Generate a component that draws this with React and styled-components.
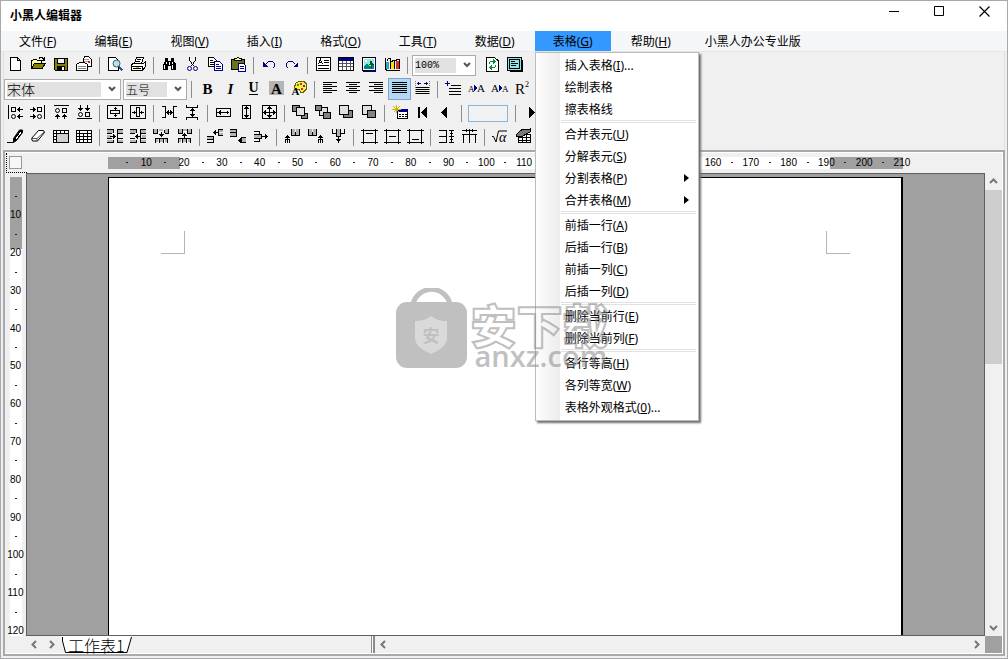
import React from 'react';
import styled, { createGlobalStyle } from 'styled-components';

const GlobalStyle = createGlobalStyle`
  * {
    box-sizing: border-box;
  }

  body {
    margin: 0;
    font-family: 'Noto Sans', 'Noto Sans CJK SC', sans-serif;
    font-size: 12px;
    color: #000;
    overflow: hidden;
  }

  button,
  select {
    font: inherit;
    color: inherit;
    margin: 0;
    padding: 0;
    border: 0;
    background: none;
  }
`;

const GRAY = '#a0a0a0';
const FACE = '#f0f0f0';

const Window = styled.div`
  position: relative;
  display: flex;
  flex-direction: column;
  height: 100vh;
  border: 1px solid #a9a9ab;
  background: ${FACE};
`;

const TitleBar = styled.header`
  display: flex;
  justify-content: space-between;
  height: 30px;
  padding-left: 9px;
  background: #fff;
`;

const Title = styled.h1`
  margin: 0;
  font-size: 12px;
  font-weight: 700;
  line-height: 29px;
`;

const WindowButton = styled.button`
  width: 45px;
  height: 21px;
  line-height: 0;
`;

const MenuBar = styled.nav`
  display: flex;
  gap: 2px;
  height: 21px;
  background: #f5f6f7;
  border-bottom: 1px solid #e6e6e6;
`;

const MenuSlot = styled.div`
  position: relative;
`;

const MenuButton = styled.button`
  display: block;
  height: 20px;
  padding: 0 ${(p) => (p.$plain ? 14 : 18)}px;
  line-height: 22px;
  white-space: nowrap;
  background: ${(p) => (p.$open ? '#3399ff' : 'transparent')};
`;

const Key = styled.span`
  text-decoration: underline;
  text-underline-offset: 1px;
  text-decoration-skip-ink: none;
`;

const Dropdown = styled.div`
  position: absolute;
  z-index: 5;
  top: 21px;
  left: 0;
  width: 164px;
  padding: 1px 2px 2px 0;
  border: 1px solid #bcbcbc;
  background: linear-gradient(to right, #fdfdfd, #ececec 24px, #fff 24px);
  box-shadow: 2px 2px 2px #6e6e6e;
`;

const DropdownItem = styled.button`
  display: flex;
  align-items: center;
  justify-content: space-between;
  width: 100%;
  height: 22px;
  padding: 0 7px 0 29px;
  white-space: nowrap;
  text-align: left;
`;

const Divider = styled.hr`
  height: 3px;
  margin: 0 0 0 25px;
  border: solid #e2e2e2;
  border-width: 1px 0;
`;

const Toolbars = styled.div`
  margin: 0 2px;
  padding: 1px 0;
  border: solid #dedede;
  border-width: 0 1px;
`;

const ToolRow = styled.div`
  display: flex;
  align-items: center;
  height: 24px;
  overflow: hidden;
`;

const ToolButton = styled.button`
  display: flex;
  align-items: center;
  justify-content: center;
  flex: none;
  width: 23px;
  height: 22px;
  padding: 0;
  border: 1px solid ${(p) => (p.$active ? '#7da2ce' : 'transparent')};
  background: ${(p) => (p.$active ? '#b5d7f3' : 'transparent')};
`;

const Separator = styled.span`
  flex: none;
  width: 1px;
  height: 17px;
  margin: 0 4px 0 3px;
  background: #8c8c8c;
`;

const Combo = styled.span`
  display: flex;
  align-items: center;
  flex: none;
  width: ${(p) => p.$width}px;
  height: 21px;
  margin-right: ${(p) => p.$gap}px;
  padding-left: 2px;
  border: 1px solid #acacac;
  background: #fff;
`;

const ComboSelect = styled.select`
  flex: 1;
  min-width: 0;
  height: 15px;
  appearance: none;
  outline: none;
  border-radius: 0;
  background: #e1e1e1;
  font-family: ${(p) => (p.$mono ? "'Liberation Mono', monospace" : "'Noto Sans CJK SC', sans-serif")};
  font-size: ${(p) => p.$size}px;
  font-weight: ${(p) => (p.$mono ? 400 : 300)};
  line-height: 15px;
`;

const ComboArrow = styled.svg`
  flex: none;
  width: 19px;
  height: 19px;
`;

const PageBox = styled.input`
  flex: none;
  width: 40px;
  height: 17px;
  margin: 0 4px 0 2px;
  border: 1px solid #86b5dc;
  background: #f2f2f2;
`;

const Workspace = styled.main`
  display: flex;
  flex-direction: column;
  flex: 1;
  min-height: 0;
  margin: 0 2px 2px;
  border: 2px solid #a9a9ad;
  box-shadow: inset -1px -1px #fff, inset 0 1px #fff;
  padding: 0 0 1px;
`;

const RulerRow = styled.div`
  display: flex;
  height: 21px;
`;

const Corner = styled.div`
  width: 21px;
  padding: 3px 0 0 2px;
  margin: 1px -1px 0 1px;
  border: dotted #000;
  border-width: 0 0 1px 1px;
`;

const CornerButton = styled.button`
  display: block;
  width: 13px;
  height: 13px;
  border: 1px solid #9a9a9a;
  background: #f6f6f6;
`;

const RulerTrack = styled.div`
  display: flex;
  flex: 1;
  justify-content: center;
  align-items: center;
  margin-right: 18px;
`;

const Ruler = styled.div`
  display: flex;
  flex-direction: ${(p) => (p.$vertical ? 'column' : 'row')};
  width: ${(p) => (p.$vertical ? '12px' : '795px')};
  height: ${(p) => (p.$vertical ? 'auto' : '12px')};
  padding: ${(p) => (p.$vertical ? '10px 0 0' : '0 0 0 10px')};
  background: ${(p) =>
    p.$vertical
      ? `linear-gradient(to bottom, ${GRAY} 72px, #fff 72px)`
      : `linear-gradient(to right, ${GRAY} 72px, #fff 72px, #fff 722px, ${GRAY} 722px)`};
`;

const Tick = styled.span`
  display: flex;
  flex: none;
  align-items: center;
  justify-content: center;
  width: ${(p) => (p.$vertical ? '100%' : '5mm')};
  height: ${(p) => (p.$vertical ? '5mm' : '12px')};
  font: 10px/12px 'Liberation Sans', sans-serif;
`;

const Dot = styled.i`
  width: 2px;
  height: 1px;
  background: #222;
`;

const Body = styled.div`
  display: flex;
  flex: 1;
  min-height: 0;
`;

const SideRuler = styled.div`
  display: flex;
  justify-content: center;
  flex: none;
  width: 21px;
  padding: 4px 0 0;
  overflow: hidden;
`;

const Canvas = styled.div`
  display: flex;
  justify-content: center;
  flex: 1;
  min-width: 0;
  padding-top: 3px;
  overflow: hidden;
  border: 1px solid #5f5f5f;
  background: ${GRAY};
`;

const Page = styled.section`
  display: flex;
  justify-content: space-between;
  align-items: flex-start;
  flex: none;
  width: 795px;
  padding: 53px 51px 0 52px;
  border: solid #000;
  border-width: 1px 2px 0 1px;
  background: #fff;
`;

const MarginMark = styled.span`
  width: 24px;
  height: 23px;
  border: solid #b4b4b4;
  border-width: ${(p) => (p.$side === 'left' ? '0 1px 1px 0' : '0 0 1px 1px')};
`;

const ScrollColumn = styled.div`
  display: flex;
  flex-direction: column;
  flex: none;
  width: 17px;
  margin-right: 1px;
`;

const ScrollButton = styled.button`
  flex: none;
  width: 17px;
  height: 17px;
  line-height: 0;
`;

const Thumb = styled.div`
  height: 174px;
  background: #cdcdcd;
`;

const Spacer = styled.div`
  flex: 1;
`;

const BottomBar = styled.footer`
  display: flex;
  height: 17px;
  padding: 0 1px 0 21px;
`;

const Sheets = styled.div`
  display: flex;
  width: 345px;
`;

const SheetTab = styled.button`
  display: flex;
  margin-left: 2px;
  height: 17px;
  font: 16px/18px 'Noto Sans CJK SC', sans-serif;
  font-weight: 300;
`;

const SheetName = styled.span`
  height: 17px;
  padding: 0 1px;
  border-bottom: 1px solid #000;
  background: #fff;
  white-space: nowrap;
`;

const Splitter = styled.span`
  width: 4px;
  border: solid #8a8a8a;
  border-width: 0 2px 0 1px;
  background: #fff;
`;

const Grip = styled.span`
  width: 17px;
  background: ${GRAY};
`;

const Watermark = styled.div`
  position: absolute;
  z-index: 10;
  inset: 0 4px 2px 0;
  display: flex;
  align-items: center;
  justify-content: center;
  gap: 4px;
  opacity: 0.5;
  pointer-events: none;
`;

const Brand = styled.div`
  display: flex;
  flex-direction: column;
  padding-top: 10px;
  width: 138px;
  white-space: nowrap;
`;

const BrandName = styled.span`
  font: 900 46px/44px 'Noto Sans CJK SC', sans-serif;
  color: transparent;
  -webkit-text-stroke: 2px #828282;
`;

const BrandSite = styled.span`
  padding-left: 4px;
  font: 600 29px/22px 'Open Sans', sans-serif;
  color: #828282;
`;

const Glyph = styled.svg`
  display: block;
  flex: none;
  width: 17px;
  height: 16px;
  overflow: visible;
  fill: none;
  stroke: #000;
  shape-rendering: crispEdges;

  text {
    fill: #000;
    stroke: none;
  }
`;

const HALF = '#b4b4b4';

const icons = {
  新建: <path d="M3.500.500h7l3 3v9.500h-10zM10.500.500v3h3" fill="#fff" />,
  打开: (
    <>
      <path d="M1.500 11.500v-8h1l1-1h3l1 1h4v3" fill="#ffff9c" />
      <path d="M1.500 11.500l3-5h11l-3.500 5z" fill="#848400" />
      <path d="M9 1.500l1-1h2l2 2M14.500 0v3h-3" />
    </>
  ),
  保存: (
    <>
      <path d="M1.500 1.500h13v12h-12l-1-1z" fill="#848400" />
      <path d="M4.500 1.500h7v5h-7z" fill="#f0f0f0" />
      <path d="M4 9h8v5H4z" fill="#000" stroke="none" />
      <path d="M9 10h2v3H9z" fill="#fff" stroke="none" />
    </>
  ),
  传真: (
    <>
      <path d="M6.500 6.500l2-7h4l3 3v7h-4" fill="#fff" />
      <path d="M8 2.500h5M8 4.500h4" stroke="#999" />
      <path d="M.500 7.500l3-2h5l3 2v6h-11z" fill="#fff" />
      <path d="M2 9.500h8M2 11.500h8" stroke="#848484" />
      <path d="M12 4h2v2h-2z" fill="#e02020" stroke="none" />
    </>
  ),
  打印预览: (
    <>
      <path d="M1.500.500h7l3 3v10h-10z" fill="#fff" />
      <circle cx="9.500" cy="6.500" r="3.500" fill="#a5e8ee" stroke="#555" shapeRendering="auto" />
      <path d="M12 9.500l3.500 4" stroke="#2f4f9f" strokeWidth="2" />
    </>
  ),
  打印: (
    <>
      <path d="M4.500 6.500l2-6h7l-2 6" fill="#fff" />
      <path d="M7 2.500h4M6 4.500h4" />
      <path d="M1.500 7.500l2-1h10l2-2v5l-3 4h-11z" fill="#fff" />
      <path d="M1 9.500h11M12.500 9v4M3 11.500h8" />
      <path d="M6 10h3v1H6z" fill="#d8c800" stroke="none" />
    </>
  ),
  查找: (
    <>
      <path d="M4 1h3v3h3V1h3v3l1 2 1 1v6h-5V9H7v4H2V7l1-1 1-2z" fill="#000" stroke="none" />
      <path d="M5.500 5v2M11.500 5v2M3.500 8v4M8.500 5v3M11.500 8v4" stroke="#fff" />
    </>
  ),
  剪切: (
    <>
      <path d="M5.500 0v3l4 6M11.500 0v3l-4 6" />
      <circle cx="5.500" cy="11.500" r="2" stroke="#000084" shapeRendering="auto" />
      <circle cx="11.500" cy="11.500" r="2" stroke="#000084" shapeRendering="auto" />
    </>
  ),
  复制: (
    <>
      <path d="M1.500.500h5l3 3v6h-8z" fill="#fff" />
      <path d="M3 3.500h3M3 5.500h4M3 7.500h4" />
      <path d="M7.500 4.500h5l3 3v6h-8z" fill="#fff" stroke="#000084" />
      <path d="M9 7.500h3M9 9.500h5M9 11.500h5" stroke="#000084" />
    </>
  ),
  粘贴: (
    <>
      <path d="M1.500 2.500h13v10h-13z" fill="#6f6f20" />
      <path d="M4.500 3.500v-2h2l1-1h1l1 1h2v2z" fill="#ffff9c" />
      <path d="M8.500 6.500h5l2 2v5.500h-7z" fill="#fff" stroke="#000084" />
      <path d="M10 9.500h4M10 11.500h4" stroke="#000084" />
    </>
  ),
  撤销: (
    <>
      <path d="M4.500 7.500l3-3h4l2 2v3l-2 2" stroke="#000084" />
      <path d="M2 5v5h5z" fill="#000084" stroke="none" />
    </>
  ),
  恢复: (
    <>
      <path d="M11.500 7.500l-3-3h-4l-2 2v3l2 2" stroke="#000084" />
      <path d="M14 5v5H9z" fill="#000084" stroke="none" />
    </>
  ),
  文本框: (
    <>
      <path d="M1.500.500h14v13h-14z" fill="#fff" />
      <path d="M3.500 7l2-4.500 2 4.500M4 5.500h3M9 3.500h5M9 5.500h5M3 8.500h11M3 11.500h11" />
    </>
  ),
  表格: (
    <>
      <path d="M.500.500h15v13H.500z" fill="#fff" />
      <path d="M1 1h14v3H1z" fill="#000084" stroke="none" />
      <path d="M1 6.500h14M1 9.500h14M4.500 4v9M8.500 4v9M12.500 4v9" stroke="#555" />
    </>
  ),
  图片: (
    <>
      <path d="M1.500.500h13v13h-13z" fill="#fff" />
      <path d="M3 2h10v10H3z" fill="#8ee6e6" stroke="none" />
      <path d="M3 12v-3l3-2 3 2 4-1v4z" fill="#008484" stroke="none" />
      <path d="M10 3l3 5h-2v3h-1V8H8z" fill="#006400" stroke="none" />
      <circle cx="5" cy="4" r="1" fill="#fff" stroke="none" />
      <path d="M14.500 1v13H2" stroke="#000084" />
    </>
  ),
  图表: (
    <>
      <path d="M1.500 1v11.500l2 1H16" />
      <path d="M2 5h3v7H2z" fill="#2aa9c0" stroke="none" />
      <path d="M7 5h3v7H7z" fill="#ffe000" stroke="none" />
      <path d="M12 4h3v8h-3z" fill="#e03020" stroke="none" />
      <path d="M2.500 4.500l2-3h2V12M7.500 5.500l1-2h2V12M11.500 4.500l1-2h3V12M6.500 5v7" />
    </>
  ),
  刷新: (
    <>
      <path d="M2.500.500h8l4 3.500v10h-12z" fill="#fff" />
      <path d="M5.500 7V5.500l1-1H10M11.500 8v1.500l-1 1H7" stroke="#008a3a" />
      <path d="M9 2l3 2.500L9 7zM8 8v5l-3-2.500z" fill="#008a3a" stroke="none" />
    </>
  ),
  属性: (
    <>
      <path d="M.500.500h14v13H.500z" fill="#8fe3e3" />
      <path d="M2.500 2.500h10v9h-10zM4 4.500h4M4 6.500h7M4 8.500h5M15.500 3v11.500H3" />
    </>
  ),
  加粗: (
    <text x="8.500" y="12.500" textAnchor="middle" fontFamily="Liberation Serif, serif" fontSize="15" fontWeight="700">
      B
    </text>
  ),
  倾斜: (
    <text x="8.500" y="12.500" textAnchor="middle" fontFamily="Liberation Serif, serif" fontSize="15" fontWeight="700" fontStyle="italic">
      I
    </text>
  ),
  下划线: (
    <>
      <text x="8.500" y="11" textAnchor="middle" fontFamily="Liberation Serif, serif" fontSize="14" fontWeight="700">
        U
      </text>
      <path d="M4 13.500h9" />
    </>
  ),
  底纹: (
    <>
      <path d="M1 0h15v14H1z" fill="#b4b4b4" stroke="none" />
      <text x="8.500" y="12.500" textAnchor="middle" fontFamily="Liberation Serif, serif" fontSize="15" fontWeight="700">
        A
      </text>
    </>
  ),
  颜色: (
    <>
      <path d="M3.500 6.500l1-4 4-2.500h4l3 3v5l-3 3h-3l-1-2-3-1z" fill="#ffec3d" stroke="#66600c" />
      <path d="M9 2h2v2H9z" fill="#e02020" stroke="none" />
      <path d="M12 4h2v2h-2z" fill="#2040e0" stroke="none" />
      <path d="M6 3h2v2H6z" fill="#10a040" stroke="none" />
      <path d="M10 7h2v2h-2z" fill="#e02020" stroke="none" />
      <text x="4.500" y="14" textAnchor="middle" fontFamily="Liberation Serif, serif" fontSize="11" fontWeight="700">
        A
      </text>
    </>
  ),
  左对齐: <path d="M1 1.500h14M1 3.500h9M1 5.500h14M1 7.500h9M1 9.500h14M1 11.500h9" />,
  居中: <path d="M1 1.500h14M4 3.500h8M1 5.500h14M4 7.500h8M1 9.500h14M4 11.500h8" />,
  右对齐: <path d="M1 1.500h14M6 3.500h9M1 5.500h14M6 7.500h9M1 9.500h14M6 11.500h9" />,
  两端对齐: <path d="M1 1.500h15M1 3.500h15M1 5.500h15M1 7.500h15M1 9.500h15M1 11.500h15" />,
  分散对齐: (
    <>
      <path d="M2 6.500h13M2 8.500h13M2 10.500h13M2 12.500h13" />
      <path d="M1.500 0v14M15.500 0v14" stroke="#777" strokeDasharray="1 1" />
      <path d="M3 2.500h4M10 2.500h4M4.500 1v3M12.500 1v3" stroke="#000084" />
    </>
  ),
  行距: (
    <>
      <path d="M6 4.500h10M4 7.500h12M4 10.500h12M4 13.500h12" />
      <path d="M0 2.500h5M2.500 0v5" stroke="#000084" />
    </>
  ),
  缩小字距: (
    <>
      <text x="0" y="11" fontFamily="Liberation Serif, serif" fontSize="9">A</text>
      <text x="9" y="11" fontFamily="Liberation Serif, serif" fontSize="11">A</text>
      <path d="M6 4l3 3-3 3z" fill="#000084" stroke="none" />
    </>
  ),
  放大字距: (
    <>
      <text x="0" y="11" fontFamily="Liberation Serif, serif" fontSize="11">A</text>
      <text x="11" y="11" fontFamily="Liberation Serif, serif" fontSize="9">A</text>
      <path d="M8 4l3 3-3 3z" fill="#000084" stroke="none" />
    </>
  ),
  上标: (
    <>
      <text x="1" y="13" fontFamily="Liberation Serif, serif" fontSize="15">R</text>
      <text x="11" y="6" fontFamily="Liberation Serif, serif" fontSize="8">2</text>
    </>
  ),
  靠左: (
    <>
      <path d="M1.500 0v14M4.500 2.500h4v4h-4zM10 4.500h6M10 11.500h6" />
      <circle cx="6.500" cy="11.500" r="2" shapeRendering="auto" />
      <path d="M10 4.500l3-2.500v5zM10 11.500l3-2.500v5z" fill="#000" stroke="none" />
    </>
  ),
  靠右: (
    <>
      <path d="M14.500 0v14M7.500 2.500h4v4h-4zM0 4.500h6M0 11.500h6" />
      <circle cx="9.500" cy="11.500" r="2" shapeRendering="auto" />
      <path d="M6 4.500l-3-2.500v5zM6 11.500l-3-2.500v5z" fill="#000" stroke="none" />
    </>
  ),
  靠上: (
    <>
      <path d="M1 .500h15M9.500 3.500h4v4h-4zM4.500 10v4M11.500 10v4" />
      <circle cx="4.500" cy="5.500" r="2" shapeRendering="auto" />
      <path d="M4.500 9L7 12H2zM11.500 9l2.500 3H9z" fill="#000" stroke="none" />
    </>
  ),
  靠下: (
    <>
      <path d="M1 13.500h15M9.500 7.500h4v4h-4zM4.500 0v4M11.500 0v4" />
      <circle cx="4.500" cy="9.500" r="2" shapeRendering="auto" />
      <path d="M4.500 6L7 3H2zM11.500 6L14 3H9z" fill="#000" stroke="none" />
    </>
  ),
  垂直居中: (
    <>
      <path d="M.500.500h15v13H.500zM3.500 5.500h9v3h-9zM8.500 2v2M8.500 10v2" />
      <path d="M8.500 5L6 3h5zM8.500 9l2.500 2H6z" fill="#000" stroke="none" />
    </>
  ),
  水平居中: (
    <>
      <path d="M.500.500h15v13H.500zM6.500 2.500h3v9h-3zM2 7.500h3M11 7.500h3" />
      <path d="M6 7.500L4 5v5zM10 7.500l2-2.500v5z" fill="#000" stroke="none" />
    </>
  ),
  等宽间距: (
    <>
      <path d="M1 1.500h3.500v11H1M16 1.500h-3.500v11H16M6 7.500h5" />
      <path d="M5 7.500l3-2.500v5zM12 7.500L9 5v5z" fill="#000" stroke="none" />
    </>
  ),
  等高间距: (
    <>
      <path d="M2.500 0v2.500h11V0M2.500 15v-2.500h11V15M8.500 5v5" />
      <path d="M8.500 3L11 6H6zM8.500 12L11 9H6z" fill="#000" stroke="none" />
    </>
  ),
  同宽: (
    <>
      <path d="M1.500 3.500h14v8h-14zM4 7.500h9" />
      <path d="M2.500 7.500l3-2.500v5zM14.500 7.500l-3-2.500v5z" fill="#000" stroke="none" />
    </>
  ),
  同高: (
    <>
      <path d="M4.500.500h8v13h-8zM8.500 3v8" />
      <path d="M8.500 1l2.500 3H6zM8.500 13l2.500-3H6z" fill="#000" stroke="none" />
    </>
  ),
  同大小: (
    <>
      <path d="M1.500.500h14v13h-14zM8.500 2v10M3 7.500h11" />
      <path d="M8.500 1L11 4H6zM8.500 13l2.500-3H6zM2 7.500L5 5v5zM15 7.500L12 5v5z" fill="#000" stroke="none" />
    </>
  ),
  置顶: (
    <>
      <path d="M.500.500h7v6h-7zM9.500 8.500h6v5h-6z" fill="#848484" />
      <path d="M4.500 2.500h8v8h-8z" fill="#e0e0e0" />
    </>
  ),
  置底: (
    <>
      <path d="M4.500 2.500h8v8h-8z" fill="#e0e0e0" />
      <path d="M.500.500h6v5h-6zM8.500 7.500h7v6h-7z" fill="#848484" />
    </>
  ),
  上移一层: (
    <>
      <path d="M5.500 5.500h9v7h-9z" fill="#848484" />
      <path d="M1.500.500h9v9h-9z" fill="#e0e0e0" />
    </>
  ),
  下移一层: (
    <>
      <path d="M1.500.500h9v9h-9z" fill="#e0e0e0" />
      <path d="M6.500 5.500h8v7h-8z" fill="#848484" />
    </>
  ),
  新表页: (
    <>
      <path d="M5.500 5.500h10v8h-10z" fill="#fff" />
      <path d="M5 4h11v3H5z" fill="#000084" stroke="none" />
      <path d="M7 9.500h8M7 11.500h8" strokeDasharray="2 1" />
      <path d="M4.500 0v8M0 4.500h9M1.500 1.500l6 6M7.500 1.500l-6 6" stroke="#c9b400" />
    </>
  ),
  首页: <path d="M3 2h2v11H3zM12 2v11L6 7.500z" fill="#000" stroke="none" />,
  上一页: <path d="M9 2v11L3 7.500z" fill="#000" stroke="none" />,
  下一页: <path d="M6 2v11l6-5.500z" fill="#000" stroke="none" />,
  画笔: (
    <>
      <path d="M0 13.500h6" />
      <path d="M6.500 13.500v-4l6-8.500h3v2.500l-6 8z" fill="#000" shapeRendering="auto" />
      <path d="M9 10l5-7" stroke="#fff" />
    </>
  ),
  橡皮: (
    <g shapeRendering="auto">
      <path d="M1.500 9.500l7-8h5l1 2-7 8.500h-5z" fill="#fff" />
      <path d="M1.500 9.500h5.500l7.500-7M7 9.500v3" stroke="#555" />
    </g>
  ),
  表头: (
    <>
      <path d="M.500 1.500h15v12H.500z" fill="#fff" />
      <path d="M4 5h11v8H4z" fill="#d0d0d0" stroke="none" />
      <path d="M.500 4.500h15M3.500 1.500v12M7.500 1.500v3M11.500 1.500v3M.500 7.500h3M.500 10.500h3" />
    </>
  ),
  网格: (
    <>
      <path d="M.500 1.500h15v12H.500z" fill="#fff" />
      <path d="M.500 4.500h15M.500 7.500h15M.500 10.500h15M3.500 1.500v12M7.500 4.500v9M11.500 1.500v12" />
    </>
  ),
  插入列左: (
    <>
      <path d="M0 1h6v3H0zM0 6h4v3H0zM0 11h6v2H0zM10 1h6v3h-6zM10 11h6v2h-6z" fill={HALF} stroke="none" />
      <path d="M0 .500h6.500v3.500M0 4.500h5M0 9.500h5M0 13.500h6.500v-3M16 .500h-5.500v13H16M10 4.500h6M10 9.500h6M3 7.500h5" />
      <path d="M6 5l3 2.500L6 10z" fill="#000" stroke="none" />
    </>
  ),
  插入列右: (
    <>
      <path d="M0 1h6v3H0zM0 11h6v2H0zM10 1h6v3h-6zM12 6h4v3h-4zM10 11h6v2h-6z" fill={HALF} stroke="none" />
      <path d="M0 .500h6.500v3.500M0 4.500h5M0 9.500h5M0 13.500h6.500v-3M16 .500h-5.500v13H16M10 4.500h6M10 9.500h6M5 7.500h6" />
      <path d="M8 5L5 7.500 8 10z" fill="#000" stroke="none" />
    </>
  ),
  插入行上: (
    <>
      <path d="M1 0h3v4H1zM6 0h4v2H6zM12 0h3v4h-3zM2 10h3v3H2zM7 10h3v3H7zM12 10h3v3h-3z" fill={HALF} stroke="none" />
      <path d="M.500 0v4.500h4V0M11.500 4V.500M11.500 4.500h4V0M2.500 14V9.500h12V14M6.500 9.500V14M10.500 9.500V14M8.500 3v4" />
      <path d="M6 5h5l-2.500 3z" fill="#000" stroke="none" />
    </>
  ),
  插入行下: (
    <>
      <path d="M3 0h3v4H3zM7 0h4v2H7zM12 0h3v4h-3zM2 10h3v3H2zM7 10h3v3H7zM12 10h3v3h-3z" fill={HALF} stroke="none" />
      <path d="M2.500 0v4.500h4V0M11.500 0v4.500h4V0M2.500 14V9.500h12V14M6.500 9.500V14M10.500 9.500V14M8.500 4v5" />
      <path d="M6 7h5L8.500 4z" fill="#000" stroke="none" />
    </>
  ),
  右上移: (
    <>
      <path d="M0 8h6v2H0zM12 1h4v2h-4zM12 4h4v2h-4z" fill={HALF} stroke="none" />
      <path d="M0 7.500h6.500v6.500M0 10.500h6M0 13.500h6M16 .500h-4.500v6H16M7 3.500h5" />
      <path d="M9 1v5L6 3.500z" fill="#000" stroke="none" />
    </>
  ),
  右下移: (
    <>
      <path d="M0 1h6v2H0zM0 4h6v3H0zM12 9h4v4h-4z" fill={HALF} stroke="none" />
      <path d="M0 .500h6.500v7H0M0 3.500h6M16 8.500h-4.500v5H16M8 11.500h4" />
      <path d="M11 9v5l-3-2.500z" fill="#000" stroke="none" />
    </>
  ),
  右移: (
    <>
      <path d="M1 6h7v3H1z" fill={HALF} stroke="none" />
      <path d="M1 2.500h5v3M1 5.500h7.500v4H1M1 12.500h5v-3M8 7.500h6" />
      <path d="M12 5l3 2.500-3 2.500z" fill="#000" stroke="none" />
    </>
  ),
  上左移: (
    <>
      <path d="M8 0h3v6H8zM12 0h3v6h-3z" fill={HALF} stroke="none" />
      <path d="M7.500 0v6.500h8V0M11.500 3v3M1.500 14v-3.500h4V14M3.500 7v7" />
      <path d="M3.500 6L6 9H1z" fill="#000" stroke="none" />
    </>
  ),
  上右移: (
    <>
      <path d="M2 0h3v6H2zM6 0h3v6H6z" fill={HALF} stroke="none" />
      <path d="M1.500 0v6.500h8V0M5.500 3v3M11.500 14v-3.500h4V14M13.500 7v7" />
      <path d="M13.500 6L16 9h-5z" fill="#000" stroke="none" />
    </>
  ),
  下移: (
    <>
      <path d="M7 0h3v7H7z" fill={HALF} stroke="none" />
      <path d="M2.500 0v4.500h4M6.500 0v7.500h4V0M14.500 0v4.500h-4M8.500 8v5" />
      <path d="M6 10h5l-2.500 4z" fill="#000" stroke="none" />
    </>
  ),
  顶端: <path d="M2.500 0v15M14.500 0v15M0 1.500h17M0 13.500h17M5 4.500h7" />,
  中部: <path d="M2.500 0v15M14.500 0v15M0 1.500h17M0 13.500h17M5 7.500h7" />,
  底端: <path d="M2.500 0v15M14.500 0v15M0 1.500h17M0 13.500h17M5 10.500h7" />,
  等行高: <path d="M1 1.500h8M1 7.500h8M1 13.500h8M8.500 1v13M11 1.500h5M11 7.500h5M11 13.500h5M13.500 2v11M12 4.500h3M12 10.500h3" />,
  等列宽: <path d="M1 1.500h15M1 5.500h15M2.500 5v9M8.500 0v14M14.500 5v9M5.500 0v3M11.500 0v3" />,
  公式: (
    <>
      <path d="M0 7.500h1.500L4 13 6.500 2H15" shapeRendering="auto" />
      <text x="7" y="13" fontFamily="Liberation Serif, serif" fontSize="14" fontStyle="italic">
        α
      </text>
    </>
  ),
  表格样式: (
    <>
      <path d="M3.500 5.500h12v8h-12z" fill="#fff" />
      <path d="M3.500 8.500h12M3.500 11.500h12M7.500 5.500v8M11.500 5.500v8" />
      <path d="M1 6l4-4 3-2 3 1 4-1v3l-4 2-3 2H1z" fill="#777" />
    </>
  ),
};

// "|" marks a separator, a leading "*" marks the pressed button
const fileTools =
  '新建,打开,保存,传真,|,打印预览,打印,|,查找,剪切,复制,粘贴,|,撤销,恢复,|,文本框,表格,图片,图表,|';
const textTools = '|,加粗,倾斜,下划线,底纹,颜色,|,左对齐,居中,右对齐,*两端对齐,分散对齐,|,行距,缩小字距,放大字距,上标';
const layoutTools =
  '靠左,靠右,靠上,靠下,|,垂直居中,水平居中,|,等宽间距,等高间距,|,同宽,同高,同大小,|,置顶,置底,上移一层,下移一层,|,新表页,首页,上一页,|';
const tableTools =
  '画笔,橡皮,表头,网格,|,插入列左,插入列右,插入行上,插入行下,|,右上移,右下移,右移,|,上左移,上右移,下移,|,顶端,中部,底端,|,等行高,等列宽,|,公式,表格样式';

const menus = [
  ['文件', 'F'],
  ['编辑', 'E'],
  ['视图', 'V'],
  ['插入', 'I'],
  ['格式', 'O'],
  ['工具', 'T'],
  ['数据', 'D'],
  ['表格', 'G'],
  ['帮助', 'H'],
  ['小黑人办公专业版'],
];

const tableMenu = [
  { text: '插入表格', hotkey: 'I', more: true },
  { text: '绘制表格' },
  { text: '擦表格线' },
  null,
  { text: '合并表元', hotkey: 'U' },
  { text: '分解表元', hotkey: 'S' },
  { text: '分割表格', hotkey: 'P', sub: true },
  { text: '合并表格', hotkey: 'M', sub: true },
  null,
  { text: '前插一行', hotkey: 'A' },
  { text: '后插一行', hotkey: 'B' },
  { text: '前插一列', hotkey: 'C' },
  { text: '后插一列', hotkey: 'D' },
  null,
  { text: '删除当前行', hotkey: 'E' },
  { text: '删除当前列', hotkey: 'F' },
  null,
  { text: '各行等高', hotkey: 'H' },
  { text: '各列等宽', hotkey: 'W' },
  { text: '表格外观格式', hotkey: '0', more: true },
];

function Label({ text, hotkey, more }) {
  return (
    <span>
      {text}
      {hotkey && (
        <>
          (<Key>{hotkey}</Key>)
        </>
      )}
      {more && '...'}
    </span>
  );
}

function Tools({ list }) {
  return list.split(',').map((entry, i) => {
    if (entry === '|') return <Separator key={i} />;
    const active = entry.startsWith('*');
    const name = entry.replace('*', '');
    return (
      <ToolButton key={i} type="button" aria-label={name} $active={active}>
        <Glyph viewBox="0 0 17 16">{icons[name]}</Glyph>
      </ToolButton>
    );
  });
}

function ComboBox({ label, value, width, gap, size, mono }) {
  return (
    <Combo $width={width} $gap={gap}>
      <ComboSelect aria-label={label} defaultValue={value} $size={size} $mono={mono}>
        <option>{value}</option>
      </ComboSelect>
      <ComboArrow viewBox="0 0 19 19">
        <path d="M8 7l3 3 3-3" fill="none" stroke="#555" strokeWidth="2" />
      </ComboArrow>
    </Combo>
  );
}

function Ticks({ count, vertical }) {
  return Array.from({ length: count }, (_, i) => (
    <Tick key={i} $vertical={vertical}>
      {i % 2 ? <span>{(i + 1) * 5}</span> : <Dot />}
    </Tick>
  ));
}

const arrows = {
  up: 'M5 10l3.500-3.500L12 10',
  down: 'M5 7l3.500 3.500L12 7',
  left: 'M10 5L6.500 8.500 10 12',
  right: 'M7 5l3.500 3.500L7 12',
};

function Arrow({ to }) {
  return (
    <ScrollButton type="button" aria-label={to}>
      <svg width="17" height="17" viewBox="0 0 17 17">
        <path d={arrows[to]} fill="none" stroke="#777" strokeWidth="2" />
      </svg>
    </ScrollButton>
  );
}

function App() {
  return (
    <>
      <GlobalStyle />
      <Window>
        <TitleBar>
          <Title>小黑人编辑器</Title>
          <div>
            <WindowButton type="button" aria-label="最小化">
              <svg width="11" height="11" viewBox="0 0 11 11">
                <path d="M0 5.500h10" stroke="#000" />
              </svg>
            </WindowButton>
            <WindowButton type="button" aria-label="最大化">
              <svg width="11" height="11" viewBox="0 0 11 11">
                <path d="M.500.500h9v9h-9z" fill="none" stroke="#000" />
              </svg>
            </WindowButton>
            <WindowButton type="button" aria-label="关闭">
              <svg width="11" height="11" viewBox="0 0 11 11">
                <path d="M.500.500l10 10M10.500.500l-10 10" stroke="#000" strokeWidth="1.200" />
              </svg>
            </WindowButton>
          </div>
        </TitleBar>

        <MenuBar>
          {menus.map(([text, hotkey]) => (
            <MenuSlot key={text}>
              <MenuButton type="button" $open={hotkey === 'G'} $plain={!hotkey}>
                <Label text={text} hotkey={hotkey} />
              </MenuButton>
              {hotkey === 'G' && (
                <Dropdown role="menu">
                  {tableMenu.map((item, i) =>
                    item ? (
                      <DropdownItem key={i} type="button" role="menuitem">
                        <Label {...item} />
                        {item.sub && (
                          <svg width="5" height="8" viewBox="0 0 5 8">
                            <path d="M0 0l5 4-5 4z" />
                          </svg>
                        )}
                      </DropdownItem>
                    ) : (
                      <Divider key={i} />
                    )
                  )}
                </Dropdown>
              )}
            </MenuSlot>
          ))}
        </MenuBar>

        <Toolbars>
          <ToolRow>
            <Tools list={fileTools} />
            <ComboBox label="显示比例" value="100%" width={64} gap={5} size={10} mono />
            <Tools list="刷新,属性" />
          </ToolRow>
          <ToolRow>
            <ComboBox label="字体" value="宋体" width={117} gap={2} size={14} />
            <ComboBox label="字号" value="五号" width={64} gap={1} size={12} />
            <Tools list={textTools} />
          </ToolRow>
          <ToolRow>
            <Tools list={layoutTools} />
            <PageBox aria-label="页码" />
            <Tools list="|,下一页" />
          </ToolRow>
          <ToolRow>
            <Tools list={tableTools} />
          </ToolRow>
        </Toolbars>

        <Workspace>
          <RulerRow>
            <Corner>
              <CornerButton type="button" aria-label="全选" />
            </Corner>
            <RulerTrack>
              <Ruler>
                <Ticks count={42} />
              </Ruler>
            </RulerTrack>
          </RulerRow>
          <Body>
            <SideRuler>
              <Ruler $vertical>
                <Ticks count={24} vertical />
              </Ruler>
            </SideRuler>
            <Canvas>
              <Page>
                <MarginMark $side="left" />
                <MarginMark $side="right" />
              </Page>
            </Canvas>
            <ScrollColumn>
              <Arrow to="up" />
              <Thumb />
              <Spacer />
              <Arrow to="down" />
            </ScrollColumn>
          </Body>
          <BottomBar>
            <Sheets>
              <Arrow to="left" />
              <Arrow to="right" />
              <SheetTab type="button">
                <svg width="5" height="17" viewBox="0 0 5 17">
                  <path d="M0 1l4 15.500h1V0H0z" fill="#fff" />
                  <path d="M.500 1v4l3 11.500H5" fill="none" stroke="#000" />
                </svg>
                <SheetName>工作表1</SheetName>
                <svg width="6" height="17" viewBox="0 0 6 17">
                  <path d="M0 0h5L0 16z" fill="#fff" />
                  <path d="M0 16.500h1L5.500 1" fill="none" stroke="#000" />
                </svg>
              </SheetTab>
            </Sheets>
            <Splitter />
            <Arrow to="left" />
            <Spacer />
            <Arrow to="right" />
            <Grip />
          </BottomBar>
        </Workspace>

        <Watermark aria-hidden="true">
          <svg width="71" height="82" viewBox="0 0 71 82">
            <path d="M17 16a19 19 0 0 1 37 0" fill="none" stroke="#828282" strokeWidth="5" />
            <rect y="14" width="71" height="66" rx="11" fill="#828282" />
            <path d="M35 28c5 4 10 5 16 5v17c0 8-8 12-16 16-8-4-16-8-16-16V33c6 0 11-1 16-5z" fill="#b5b5b5" />
            <text x="35" y="54" textAnchor="middle" fontFamily="Noto Sans CJK SC" fontSize="17" fontWeight="700" fill="#828282">
              安
            </text>
          </svg>
          <Brand>
            <BrandName>安下载</BrandName>
            <BrandSite>anxz.com</BrandSite>
          </Brand>
        </Watermark>
      </Window>
    </>
  );
}

export default App;
